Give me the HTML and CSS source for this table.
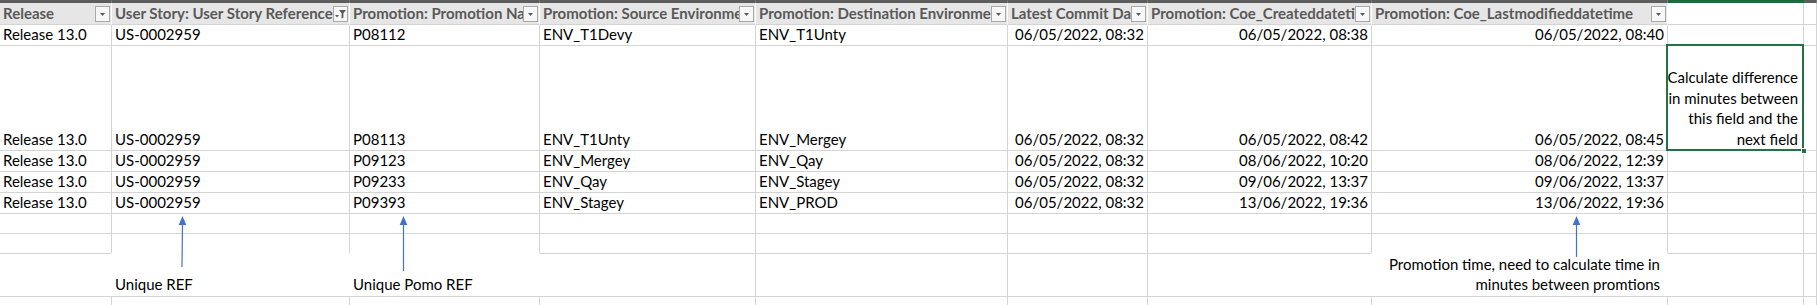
FILE: index.html
```html
<!DOCTYPE html>
<html>
<head>
<meta charset="utf-8">
<link rel="stylesheet" href="styles.css">
</head>
<body>
<div class="sheet">
  <div class="grid">
    <div class="row">
      <div class="bar"></div><div class="bar"></div><div class="bar"></div><div class="bar"></div><div class="bar"></div><div class="bar"></div><div class="bar"></div><div class="bar"></div><div class="bar sel"></div><div class="bar"></div>
    </div>
    <div class="row">
      <div class="c h"><span class="ht">Release</span><span class="dd"><svg width="15" height="16" viewBox="0 0 15 16"><path d="M5 7h5l-2.5 3z" fill="#595959"/></svg></span></div>
      <div class="c h"><span class="ht">User Story: User Story Reference</span><span class="dd"><svg width="15" height="16" viewBox="0 0 15 16"><path d="M6 4h7l-2.6 3.2v4.3l-1.8 1.2v-5.5z" fill="#595959"/><path d="M2 9h4l-2 2.6z" fill="#595959"/></svg></span></div>
      <div class="c h"><span class="ht">Promotion: Promotion Name</span><span class="dd"><svg width="15" height="16" viewBox="0 0 15 16"><path d="M5 7h5l-2.5 3z" fill="#595959"/></svg></span></div>
      <div class="c h"><span class="ht">Promotion: Source Environment</span><span class="dd"><svg width="15" height="16" viewBox="0 0 15 16"><path d="M5 7h5l-2.5 3z" fill="#595959"/></svg></span></div>
      <div class="c h"><span class="ht">Promotion: Destination Environment</span><span class="dd"><svg width="15" height="16" viewBox="0 0 15 16"><path d="M5 7h5l-2.5 3z" fill="#595959"/></svg></span></div>
      <div class="c h"><span class="ht">Latest Commit Date</span><span class="dd"><svg width="15" height="16" viewBox="0 0 15 16"><path d="M5 7h5l-2.5 3z" fill="#595959"/></svg></span></div>
      <div class="c h"><span class="ht">Promotion: Coe_Createddatetime</span><span class="dd"><svg width="15" height="16" viewBox="0 0 15 16"><path d="M5 7h5l-2.5 3z" fill="#595959"/></svg></span></div>
      <div class="c h"><span class="ht">Promotion: Coe_Lastmodifieddatetime</span><span class="dd"><svg width="15" height="16" viewBox="0 0 15 16"><path d="M5 7h5l-2.5 3z" fill="#595959"/></svg></span></div>
      <div class="c"></div>
      <div class="c"></div>
    </div>
    <div class="row">
      <div class="c">Release 13.0</div><div class="c">US-0002959</div><div class="c">P08112</div><div class="c">ENV_T1Devy</div><div class="c">ENV_T1Unty</div>
      <div class="c r">06/05/2022, 08:32</div><div class="c r">06/05/2022, 08:38</div><div class="c r">06/05/2022, 08:40</div><div class="c"></div><div class="c"></div>
    </div>
    <div class="row">
      <div class="c">Release 13.0</div><div class="c">US-0002959</div><div class="c">P08113</div><div class="c">ENV_T1Unty</div><div class="c">ENV_Mergey</div>
      <div class="c r">06/05/2022, 08:32</div><div class="c r">06/05/2022, 08:42</div><div class="c r">06/05/2022, 08:45</div>
      <div class="c r active"><span class="wrap">Calculate difference<br>in minutes between<br>this field and the<br>next field</span><span class="handle"></span></div>
      <div class="c"></div>
    </div>
    <div class="row">
      <div class="c">Release 13.0</div><div class="c">US-0002959</div><div class="c">P09123</div><div class="c">ENV_Mergey</div><div class="c">ENV_Qay</div>
      <div class="c r">06/05/2022, 08:32</div><div class="c r">08/06/2022, 10:20</div><div class="c r">08/06/2022, 12:39</div><div class="c"></div><div class="c"></div>
    </div>
    <div class="row">
      <div class="c">Release 13.0</div><div class="c">US-0002959</div><div class="c">P09233</div><div class="c">ENV_Qay</div><div class="c">ENV_Stagey</div>
      <div class="c r">06/05/2022, 08:32</div><div class="c r">09/06/2022, 13:37</div><div class="c r">09/06/2022, 13:37</div><div class="c"></div><div class="c"></div>
    </div>
    <div class="row">
      <div class="c">Release 13.0</div><div class="c">US-0002959</div><div class="c">P09393</div><div class="c">ENV_Stagey</div><div class="c">ENV_PROD</div>
      <div class="c r">06/05/2022, 08:32</div><div class="c r">13/06/2022, 19:36</div><div class="c r">13/06/2022, 19:36</div><div class="c"></div><div class="c"></div>
    </div>
    <div class="row">
      <div class="c"></div><div class="c"></div><div class="c"></div><div class="c"></div><div class="c"></div><div class="c"></div><div class="c"></div><div class="c"></div><div class="c"></div><div class="c"></div>
    </div>
    <div class="row">
      <div class="c"></div><div class="c"></div><div class="c"></div><div class="c"></div><div class="c"></div><div class="c"></div><div class="c"></div><div class="c"></div><div class="c"></div><div class="c"></div>
    </div>
    <div class="row">
      <div class="c"></div><div class="c"></div><div class="c"></div><div class="c"></div><div class="c"></div><div class="c"></div><div class="c"></div><div class="c"></div><div class="c"></div><div class="c"></div>
    </div>
    <div class="row">
      <div class="c"></div><div class="c"></div><div class="c"></div><div class="c"></div><div class="c"></div><div class="c"></div><div class="c"></div><div class="c"></div><div class="c"></div><div class="c"></div>
    </div>
  </div>

  <div class="note note-ref">Unique REF</div>
  <div class="note note-pomo">Unique Pomo REF</div>
  <div class="note note-time">Promotion time, need to calculate time in<br>minutes between promtions</div>

  <svg class="arrows" width="1817" height="305" viewBox="0 0 1817 305">
    <g stroke="#4472c4" stroke-width="1.2" fill="none">
      <line x1="182.5" y1="224" x2="182" y2="267"/>
      <line x1="403.5" y1="224" x2="403.5" y2="271"/>
      <line x1="1576.5" y1="224" x2="1576.5" y2="257"/>
    </g>
    <g fill="#4472c4">
      <path d="M182.5 216l-3.8 9h7.6z"/>
      <path d="M403.5 216l-3.8 9h7.6z"/>
      <path d="M1576.5 216l-3.8 9h7.6z"/>
    </g>
  </svg>
</div>
</body>
</html>
```
FILE: styles.css
```css
* { box-sizing: border-box; }
html, body { margin: 0; padding: 0; background: #fff; }
body {
  font-family: Lato, "Noto Sans", "Liberation Sans", sans-serif;
  font-size: 15px;
  color: #000;
  overflow: hidden;
}
.sheet {
  position: relative;
  width: 1817px;
  height: 305px;
  overflow: hidden;
}
.grid {
  display: grid;
  grid-template-columns: 112px 238px 190px 216px 252px 140px 224px 296px 136px 1fr;
  grid-template-rows: 3px 22px 21px 105px 21px 21px 21px 20px 20px 43px 20px;
}
.row { display: contents; }
.bar { background: #5d5d5d; border-right: 1px solid #7a7a7a; }
.bar.sel { background: #1e6b3f; border-right: none; }
.c {
  border-right: 1px solid #d4d4d4;
  border-bottom: 1px solid #d4d4d4;
  display: flex;
  align-items: flex-end;
  padding: 0 3px 1px 3px;
  line-height: 19px;
  white-space: nowrap;
  overflow: hidden;
  min-width: 0;
}
.c.r { justify-content: flex-end; }
.c.h {
  background: #e7e6e6;
  color: #595959;
  font-weight: bold;
  align-items: center;
  padding: 0 1px 0 3px;
  border-right-color: #fff;
  border-bottom-color: #d4d4d4;
}
.ht {
  flex: 1;
  overflow: hidden;
  white-space: nowrap;
  min-width: 0;
}
.dd {
  flex: none;
  width: 15px;
  height: 16px;
  border: 1px solid #a9a9a9;
  background: #f7f7f7;
  display: flex;
}
.dd svg { display: block; margin: -1px; }
.active {
  position: relative;
  overflow: visible;
  padding: 0 5px 1px 3px;
}
.active::after {
  content: "";
  position: absolute;
  left: -2px;
  top: -2px;
  right: -1px;
  bottom: -1px;
  border: 2px solid #217346;
  pointer-events: none;
}
.wrap {
  text-align: right;
  line-height: 20.5px;
  white-space: nowrap;
}
.handle {
  position: absolute;
  right: -4px;
  bottom: -4px;
  width: 6px;
  height: 6px;
  background: #217346;
  border: 1px solid #fff;
  z-index: 2;
}
.note {
  position: absolute;
  top: 253px;
  height: 43px;
  background: #fff;
  display: flex;
  align-items: flex-end;
  padding-bottom: 2px;
  line-height: 20px;
  white-space: nowrap;
}
.note-ref { left: 111px; width: 238px; padding-left: 4px; }
.note-pomo { left: 349px; width: 191px; padding-left: 4px; }
.note-time {
  left: 1371px;
  width: 297px;
  justify-content: flex-end;
  text-align: right;
  padding-right: 8px;
  padding-bottom: 2px;
}
.arrows {
  position: absolute;
  left: 0;
  top: 0;
  pointer-events: none;
}
```
